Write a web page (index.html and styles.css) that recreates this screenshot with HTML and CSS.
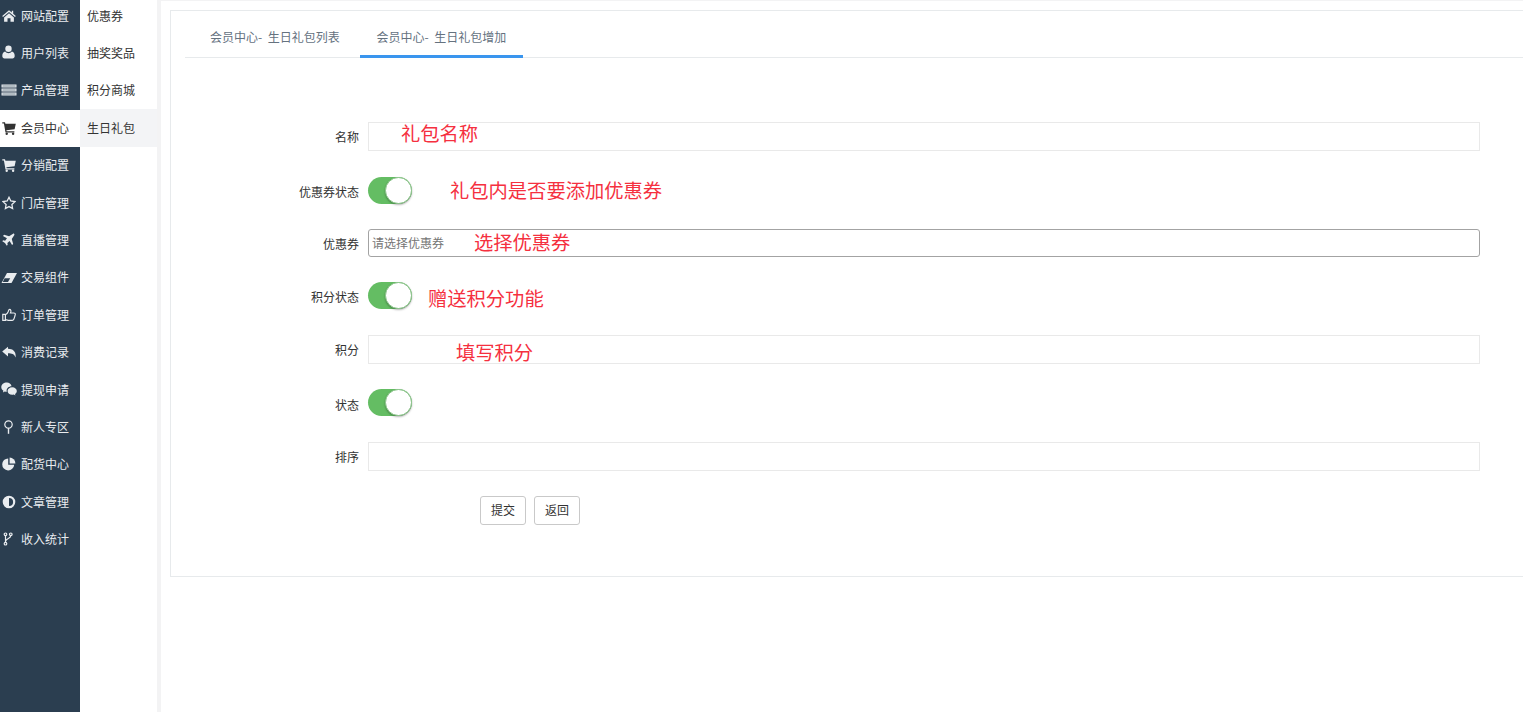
FILE: index.html
```html
<!DOCTYPE html>
<html lang="zh">
<head>
<meta charset="utf-8">
<title>会员中心</title>
<link rel="stylesheet" href="styles.css">
</head>
<body>
<nav class="side">
  <a class="side-item"><svg class="ic" viewBox="0 0 14 14"><path d="M7 1.300.2 7l.8 1L7 3l6 5 .8-1-2.600-2.200V1.700H9.800v1.900zM2.100 8.400 7 4.300l4.900 4.100v4.400H8.500V9.300h-3v3.500H2.100z"/></svg><span>网站配置</span></a>
  <a class="side-item"><svg class="ic ic-up" viewBox="0 0 14 14"><circle cx="6.500" cy="3.800" r="3.200"/><path d="M3.200 6.600C4.100 7.700 5.200 8.300 6.500 8.300s2.400-.6 3.300-1.700c1.900.3 2.900 2 2.900 4.500 0 1.500-1 2.400-2.200 2.400H2.500c-1.200 0-2.200-.9-2.200-2.400 0-2.500 1-4.200 2.900-4.500z"/></svg><span>用户列表</span></a>
  <a class="side-item"><svg class="ic ic-wide ic-up" viewBox="0 0 16 14"><path d="M.5 1.500h15v3H.5zM.5 5.500h15v3H.5zM.5 9.500h15v3H.5z"/><path d="M1.500 2.600h13v.8h-13zM1.500 6.600h13v.8h-13zM1.500 10.600h13v.8h-13z" fill="#7f8d9a"/></svg><span>产品管理</span></a>
  <a class="side-item is-active"><svg class="ic" viewBox="0 0 14 14"><path d="M.3 1.200h2.700l.4 1.500h10.400l-1.200 5.600-8.200 1 .2 1h7.800v1.300H3.500L1.900 2.500H.3z"/><circle cx="4.700" cy="12.700" r="1.200"/><circle cx="11.100" cy="12.700" r="1.200"/></svg><span>会员中心</span></a>
  <a class="side-item"><svg class="ic ic-up" viewBox="0 0 14 14"><path d="M.3 1.200h2.700l.4 1.500h10.400l-1.200 5.600-8.200 1 .2 1h7.800v1.300H3.500L1.900 2.500H.3z"/><circle cx="4.700" cy="12.700" r="1.200"/><circle cx="11.100" cy="12.700" r="1.200"/></svg><span>分销配置</span></a>
  <a class="side-item"><svg class="ic" viewBox="0 0 14 14"><path d="M7 1.300 8.800 5l4.100.6-3 2.900.7 4.100L7 10.600l-3.600 2 .7-4.100-3-2.900L5.200 5z" fill="none" stroke="currentColor" stroke-width="1.300"/></svg><span>门店管理</span></a>
  <a class="side-item"><svg class="ic ic-up" viewBox="0 0 14 14"><path transform="rotate(-45 7 7)" d="M13.700 6.100c.7.300.7 1.500 0 1.800l-4.700 1-2.500 4.500H4.900l1.100-4.500-2.900-.3-1.200 1.600H.7l.6-3.200-.6-3.200h1.200l1.200 1.600 2.900-.3L4.900.6h1.600L9 5.100z"/></svg><span>直播管理</span></a>
  <a class="side-item"><svg class="ic ic-wide" viewBox="0 0 16 14"><path d="M6 2H16L10.500 12H.5z"/><path d="M3.600 7.300h5.600l-2.200 3.600H1.800z" fill="#2b3e50"/></svg><span>交易组件</span></a>
  <a class="side-item"><svg class="ic" viewBox="0 0 14 14"><path d="M.8 6.400h2.600v6H.8zM3.400 6.800c1.400-.5 2.300-2 2.900-3.400.3-.9.400-2 1.300-2 1.100 0 1.500 1.200 1.200 2.500l-.4 1.100h3.500c.9 0 1.500.6 1.400 1.400-.4 1.900-.9 3.600-1.500 4.900-.3.700-.8 1-1.500 1H6.200c-1 0-1.800-.5-2.800-.7" fill="none" stroke="currentColor" stroke-width="1.200"/></svg><span>订单管理</span></a>
  <a class="side-item"><svg class="ic ic-up" viewBox="0 0 14 14"><path d="M6 1.800.2 6.600 6 11.400V8.300c3.700 0 6.300.7 7.500 4.300.9-5.300-1.800-8.900-7.500-8.900z"/></svg><span>消费记录</span></a>
  <a class="side-item"><svg class="ic ic-wide ic-up" viewBox="0 0 16 14"><path d="M6 .6C2.700.6.300 2.700.3 5.200c0 1.500.8 2.700 2.100 3.600l-.5 1.600 1.900-1c.6.200 1.300.3 2 .3-.1-.4-.2-.7-.2-1.100 0-2.400 2.200-4.300 5-4.400C9.900 2 8.100.6 6 .6z"/><path d="M15.800 9c0-2-2-3.800-4.600-3.800S6.600 7 6.600 9s2 3.800 4.600 3.800c.5 0 1-.1 1.600-.2l1.600.8-.4-1.400c1.100-.7 1.800-1.800 1.800-3z"/></svg><span>提现申请</span></a>
  <a class="side-item"><svg class="ic" viewBox="0 0 14 14"><circle cx="6.500" cy="4.500" r="3.700" fill="none" stroke="currentColor" stroke-width="1.200"/><path d="M5.800 8h1.400v5.800H5.800z"/></svg><span>新人专区</span></a>
  <a class="side-item"><svg class="ic ic-up" viewBox="0 0 14 14"><path d="M6.200 1.400a6 6 0 1 0 6 6.400H6.200z"/><path d="M7.600 .6a6 6 0 0 1 5.800 5.800H7.600z"/></svg><span>配货中心</span></a>
  <a class="side-item"><svg class="ic" viewBox="0 0 14 14"><path fill-rule="evenodd" d="M7 .7a6.300 6.300 0 1 1 0 12.600A6.300 6.300 0 0 1 7 .7zm0 2.200v8.200a4.100 4.100 0 0 0 0-8.200z"/></svg><span>文章管理</span></a>
  <a class="side-item"><svg class="ic ic-up" viewBox="0 0 14 14"><g fill="none" stroke="currentColor" stroke-width="1.200"><circle cx="3.500" cy="2.300" r="1.300"/><circle cx="3.500" cy="11.700" r="1.300"/><circle cx="8.800" cy="2.300" r="1.300"/><path d="M3.500 3.600v6.800M8.800 3.600C8.800 7 4 6 3.500 9.500"/></g></svg><span>收入统计</span></a>
</nav>
<nav class="sub">
  <a class="sub-item">优惠券</a>
  <a class="sub-item">抽奖奖品</a>
  <a class="sub-item">积分商城</a>
  <a class="sub-item is-active">生日礼包</a>
</nav>
<main class="main">
  <section class="card">
    <div class="tabs">
      <a class="tab">会员中心- 生日礼包列表</a>
      <a class="tab is-active">会员中心- 生日礼包增加</a>
    </div>
    <form class="form">
      <div class="row row-text gap-26">
        <label class="label">名称</label>
        <div class="field"><input class="input" type="text"><span class="note note-name">礼包名称</span></div>
      </div>
      <div class="row row-switch gap-24">
        <label class="label">优惠券状态</label>
        <div class="field"><span class="switch"><i class="knob"></i></span><span class="note note-coupon">礼包内是否要添加优惠券</span></div>
      </div>
      <div class="row row-switch gap-25">
        <label class="label">优惠券</label>
        <div class="field"><input class="input input-select" type="text" placeholder="请选择优惠券"><span class="note note-select">选择优惠券</span></div>
      </div>
      <div class="row row-switch gap-25">
        <label class="label">积分状态</label>
        <div class="field"><span class="switch"><i class="knob"></i></span><span class="note note-points">赠送积分功能</span></div>
      </div>
      <div class="row row-text gap-25">
        <label class="label">积分</label>
        <div class="field"><input class="input" type="text"><span class="note note-fill">填写积分</span></div>
      </div>
      <div class="row row-switch gap-25">
        <label class="label label-low">状态</label>
        <div class="field"><span class="switch"><i class="knob"></i></span></div>
      </div>
      <div class="row row-text gap-25">
        <label class="label">排序</label>
        <div class="field"><input class="input" type="text"></div>
      </div>
      <div class="actions">
        <button class="btn" type="button">提交</button>
        <button class="btn" type="button">返回</button>
      </div>
    </form>
  </section>
</main>
</body>
</html>
```
FILE: styles.css
```css
* { box-sizing: border-box; }
html, body { height: 100%; }
body {
  margin: 0;
  display: flex;
  height: 712px;
  overflow: hidden;
  background: #fff;
  font: 12px/1.4 "Noto Sans CJK SC", "Liberation Sans", sans-serif;
  color: #333;
}
.side {
  flex: 0 0 80px;
  background: #2b3e50;
  color: #e9ecef;
  overflow: hidden;
}
.side-item {
  display: flex;
  align-items: center;
  height: 37.4px;
  padding-left: 2px;
  white-space: nowrap;
}
.side-item:first-child { margin-top: -2.600px; }
.side-item span { margin-left: 5px; }
.side-item.is-active { background: #fff; color: #333; }
.ic { flex: 0 0 14px; width: 14px; height: 14px; fill: currentColor; }
.ic-wide { flex-basis: 16px; width: 16px; margin-left: -1px; margin-right: -1px; }
.ic-up { margin-top: -2px; }
.sub {
  flex: 0 0 77px;
  background: #fff;
  color: #333;
}
.sub-item {
  display: flex;
  align-items: center;
  height: 37.4px;
  padding-left: 7px;
}
.sub-item:first-child { margin-top: -2.800px; }
.sub-item.is-active { background: #f3f4f6; }
.main {
  flex: 1 1 auto;
  min-width: 0;
  border-left: 4px solid #f3f3f4;
  border-top: 1px solid #f3f3f4;
  padding: 9px 0 0 9px;
}
.card {
  height: 567px;
  margin-right: -4px;
  border: 1px solid #e7eaec;
  padding: 0 0 0 14px;
}
.tabs {
  display: flex;
  height: 47px;
  border-bottom: 1px solid #e7eaec;
}
.tab {
  display: flex;
  align-items: center;
  justify-content: center;
  height: 47px;
  padding: 9px 0 0;
  border-bottom: 3px solid transparent;
  color: #65727f;
  white-space: nowrap;
  word-spacing: 3px;
}
.tab:first-child { padding-left: 25px; }
.tab.is-active {
  width: 163px;
  margin-left: 20px;
  border-bottom-color: #3a95ee;
}
.form { padding: 64px 46px 0 0; }
.row { display: flex; align-items: center; }
.row-text { height: 29px; }
.row-switch { height: 28px; }
.gap-24 { margin-bottom: 24px; }
.gap-25 { margin-bottom: 25px; }
.gap-26 { margin-bottom: 26px; }
.label {
  flex: 0 0 174px;
  text-align: right;
  color: #333;
  padding-top: 2px;
}
.label-low { padding-top: 4px; }
.field {
  position: relative;
  flex: 1 1 auto;
  min-width: 0;
  margin-left: 9px;
  height: 100%;
}
.input {
  display: block;
  width: 100%;
  height: 100%;
  border: 1px solid #e9e9e9;
  outline: 0;
  padding: 0 4px;
  background: #fff;
  font: inherit;
  color: #333;
}
.input-select {
  border-color: #a3a3a3;
  border-radius: 3px;
  padding: 0 4px 2px 3px;
}
.input-select::placeholder { color: #757575; opacity: 1; }
.switch {
  position: relative;
  display: block;
  width: 44px;
  height: 27px;
  border-radius: 14px;
  background: #64bd63;
}
.knob {
  position: absolute;
  top: 0;
  right: 0;
  width: 27px;
  height: 27px;
  border-radius: 50%;
  background: #fff;
  border: 1px solid #8cc58b;
  box-shadow: 0 1px 2px rgba(0, 0, 0, .3);
}
.note {
  position: absolute;
  color: #f5303f;
  font-size: 19.300px;
  line-height: 28px;
  white-space: nowrap;
}
.note-name { left: 33px; top: -3px; }
.note-coupon { left: 82px; top: -1px; }
.note-select { left: 106px; top: -1px; }
.note-points { left: 60px; top: 2px; }
.note-fill { left: 88px; top: 3px; }
.actions {
  display: flex;
  gap: 8px;
  padding-left: 295px;
}
.btn {
  width: 46px;
  height: 29px;
  padding: 0;
  background: #fff;
  border: 1px solid #c9c9c9;
  border-radius: 3px;
  color: #333;
  font: inherit;
}
```
